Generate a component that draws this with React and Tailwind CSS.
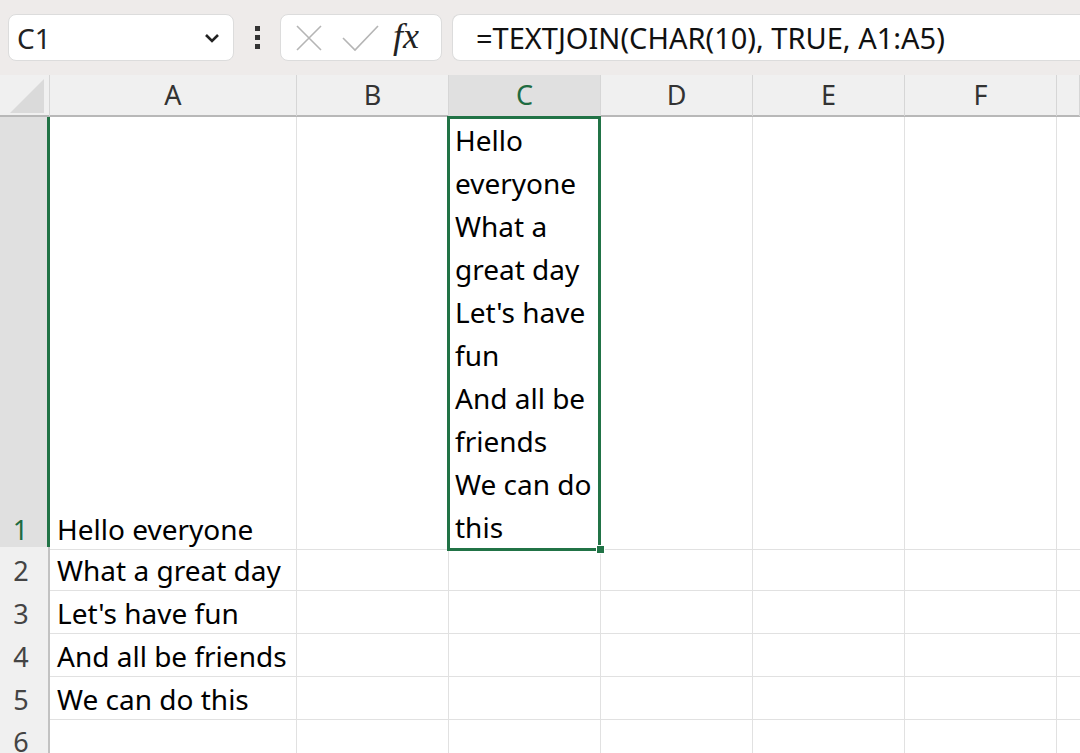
import React from 'react';

const font = { fontFamily: '"Noto Sans", "Open Sans", sans-serif' };

const cols = ['A', 'B', 'C', 'D', 'E', 'F', ''];
const colA = ['Hello everyone', 'What a great day', "Let's have fun", 'And all be friends', 'We can do this', ''];
const wrapped = ['Hello', 'everyone', 'What a', 'great day', "Let's have", 'fun', 'And all be', 'friends', 'We can do', 'this'];

function Toolbar() {
  return (
    <div className="h-[75px] bg-[#eeebea] flex items-center pl-2 gap-0">
      <div className="w-[226px] h-[47px] bg-white rounded-lg border border-[#dcdcdc] flex items-center justify-between pl-2 pr-3">
        <span className="text-[28px] text-[#222]">C1</span>
        <svg width="18" height="12" viewBox="0 0 18 12">
          <path d="M3 3l6 6 6-6" fill="none" stroke="#222" strokeWidth="2.6" />
        </svg>
      </div>
      <div className="w-[46px] flex flex-col items-center gap-[4px]">
        <div className="w-[5px] h-[5px] bg-[#333]" />
        <div className="w-[5px] h-[5px] bg-[#333]" />
        <div className="w-[5px] h-[5px] bg-[#333]" />
      </div>
      <div className="w-[162px] h-[47px] bg-white rounded-lg border border-[#dcdcdc] flex items-center px-3 gap-4">
        <svg width="32" height="32" viewBox="0 0 32 32">
          <path d="M4 4l24 24M28 4L4 28" stroke="#b5b5b5" strokeWidth="1.6" fill="none" />
        </svg>
        <svg width="40" height="32" viewBox="0 0 40 32">
          <path d="M2 16l12 12L37 4" stroke="#b5b5b5" strokeWidth="1.6" fill="none" />
        </svg>
        <span className="text-[36px] italic text-[#222] leading-none -ml-1 -mt-1" style={{ fontFamily: '"Liberation Serif", serif' }}>fx</span>
      </div>
      <div className="flex-1 ml-[10px] h-[47px] bg-white rounded-l-lg border border-r-0 border-[#dcdcdc] flex items-center pl-[23px]">
        <span className="text-[29px] text-[#111]">=TEXTJOIN(CHAR(10), TRUE, A1:A5)</span>
      </div>
    </div>
  );
}

function Header() {
  return (
    <div className="grid grid-cols-[50px_247px_152px_152px_152px_152px_152px_1fr] h-[42px] bg-[#f0f0f0] border-b-2 border-[#b8b8b8]">
      <div className="relative border-r border-[#d6d6d6]">
        <svg className="absolute right-[5px] bottom-[3px]" width="34" height="34" viewBox="0 0 34 34">
          <path d="M34 0V34H0Z" fill="#dadada" />
        </svg>
      </div>
      {cols.map((c, i) => (
        <div
          key={i}
          className={`flex items-center justify-center text-[27px] border-r border-[#d6d6d6] ${c === 'C' ? 'bg-[#e0e0e0] text-[#1e6b41]' : 'text-[#333]'}`}
        >
          {c}
        </div>
      ))}
    </div>
  );
}

function Row({ n, text, first }) {
  return (
    <div className={`grid grid-cols-[50px_247px_152px_152px_152px_152px_152px_1fr] ${first ? 'h-[430px]' : 'h-[43px]'}`}>
      <div
        className={`flex items-end justify-center pr-[6px] text-[27px] leading-[43px] border-b overflow-hidden ${first ? 'bg-[#e0e0e0] text-[#1e6b41] border-r-[3px] border-r-[#217346] border-b-[#cfcfcf]' : 'bg-[#f0f0f0] text-[#444] border-r-2 border-r-[#c2c2c2] border-b-[#d6d6d6]'}`}
      >
        <span className="relative top-[2px]">{n}</span>
      </div>
      <div className="flex items-end pl-[7px] text-[28px] text-black border-r border-b border-[#e1e1e1] leading-[43px] whitespace-nowrap">
        <span className="relative top-[2px]">{text}</span>
      </div>
      <div className="border-r border-b border-[#e1e1e1]" />
      {first ? (
        <div className="relative border-r border-b border-[#e1e1e1]">
          <div className="flex flex-col pl-[6px] pt-[2px] text-[28px] text-black leading-[43px]">
            {wrapped.map((w, i) => (
              <div key={i} className="whitespace-nowrap">{w}</div>
            ))}
          </div>
          <div className="absolute -left-[2px] -top-[1px] -right-[1px] -bottom-[2px] border-[3px] border-[#217346] pointer-events-none" />
          <div className="absolute -right-[5px] -bottom-[5px] w-[9px] h-[9px] bg-[#217346] border border-white" />
        </div>
      ) : (
        <div className="border-r border-b border-[#e1e1e1]" />
      )}
      <div className="border-r border-b border-[#e1e1e1]" />
      <div className="border-r border-b border-[#e1e1e1]" />
      <div className="border-r border-b border-[#e1e1e1]" />
      <div className="border-b border-[#e1e1e1]" />
    </div>
  );
}

export default function App() {
  return (
    <div className="w-[1080px] h-[753px] overflow-hidden bg-white" style={font}>
      <Toolbar />
      <Header />
      {colA.map((t, i) => (
        <Row key={i} n={i + 1} text={t} first={i === 0} />
      ))}
    </div>
  );
}
